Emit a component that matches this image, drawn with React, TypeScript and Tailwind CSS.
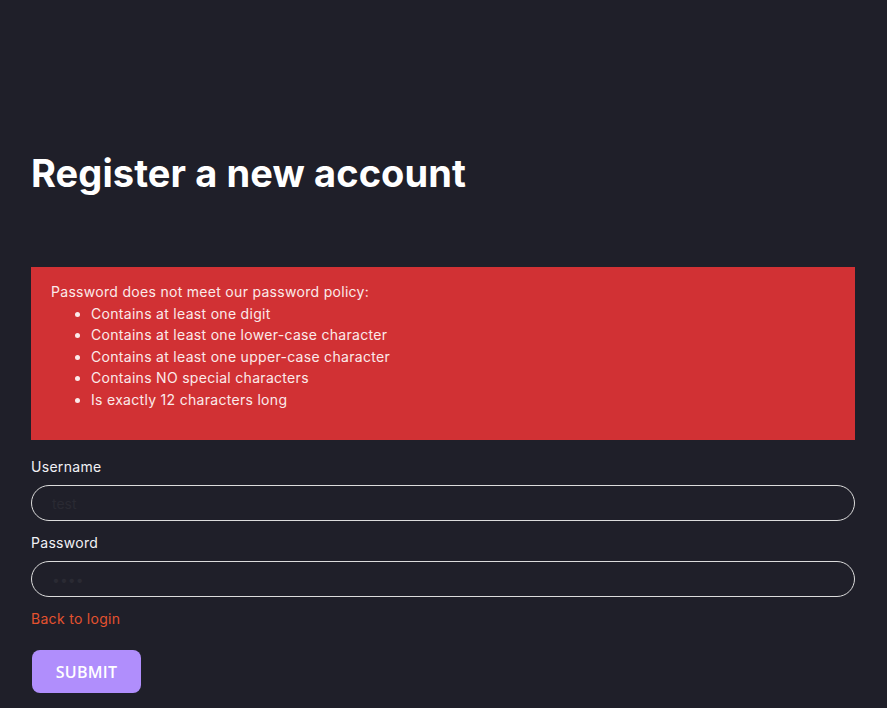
export default function App() {
  const rules = [
    "Contains at least one digit",
    "Contains at least one lower-case character",
    "Contains at least one upper-case character",
    "Contains NO special characters",
    "Is exactly 12 characters long",
  ];

  return (
    <div className="min-h-[708px] w-full bg-[#1f1f29] font-['Inter','Noto_Sans',sans-serif] text-white">
      <div className="px-[31px] pr-[32px] pt-[148px]">
        {/* heading */}
        <h1 className="text-[38px] font-bold leading-[50px] tracking-[0.1px]">Register a new account</h1>

        {/* policy error */}
        <div className="mt-[69px] bg-[#d13134] px-5 pt-[14px] pb-[30px] text-[14px] leading-[21.5px] tracking-[0.3px] text-[#fbeaea]">
          <p>Password does not meet our password policy:</p>
          <ul className="list-disc pl-[40px]">
            {rules.map((rule, i) => (
              <li key={i}>{rule}</li>
            ))}
          </ul>
        </div>

        {/* form */}
        <form className="mt-[16px] flex flex-col">
          <label className="text-[14px] leading-[22px] tracking-[0.3px] text-[#f1f1f5]">Username</label>
          <input
            className="mt-[7px] h-[36px] rounded-full border border-[#dcdcdc] bg-transparent px-[20px] text-[14px] text-[#2a2a33] outline-none"
            defaultValue="test"
          />
          <label className="mt-[11px] text-[14px] leading-[22px] tracking-[0.3px] text-[#f1f1f5]">Password</label>
          <input
            type="password"
            className="mt-[7px] h-[36px] rounded-full border border-[#dcdcdc] bg-transparent px-[20px] text-[14px] text-[#2a2a33] outline-none"
            defaultValue="test"
          />
          <a href="#" className="mt-[11px] self-start text-[14px] leading-[22px] tracking-[0.3px] text-[#e4522f]">Back to login</a>
          <div className="mt-[20px]">
            <button
              type="button"
              className="ml-px h-[43px] w-[109px] rounded-[8px] bg-[#b08efc] font-['Open_Sans',sans-serif] text-[16px] font-semibold tracking-[0.3px] text-white"
            >
              SUBMIT
            </button>
          </div>
        </form>
      </div>
    </div>
  );
}
